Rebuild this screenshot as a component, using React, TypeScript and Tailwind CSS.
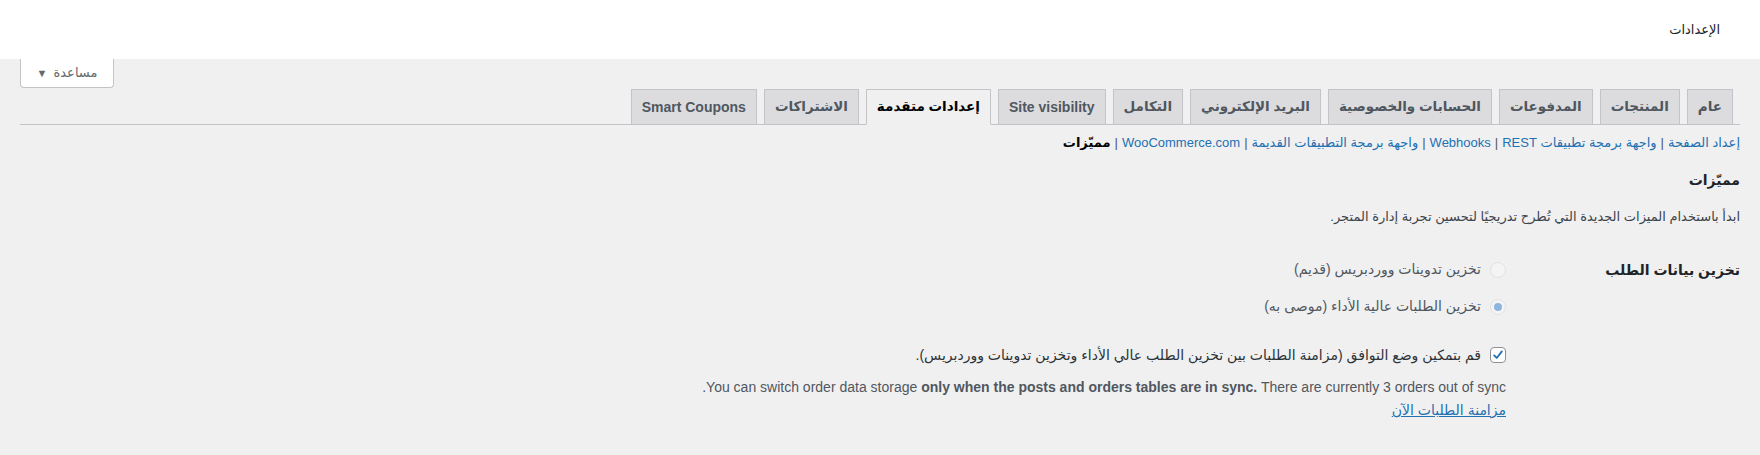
import React from 'react';

const font = { fontFamily: '"Liberation Sans", "DejaVu Sans", sans-serif' };

const tabs = [
  { label: 'عام' },
  { label: 'المنتجات' },
  { label: 'المدفوعات' },
  { label: 'الحسابات والخصوصية' },
  { label: 'البريد الإلكتروني' },
  { label: 'التكامل' },
  { label: 'Site visibility', latin: true },
  { label: 'إعدادات متقدمة', active: true },
  { label: 'الاشتراكات' },
  { label: 'Smart Coupons', latin: true },
];

const sublinks = [
  'إعداد الصفحة',
  'واجهة برمجة تطبيقات REST',
  'Webhooks',
  'واجهة برمجة التطبيقات القديمة',
  'WooCommerce.com',
];

function Radio({ checked }: { checked?: boolean }) {
  return (
    <span className="flex h-4 w-4 shrink-0 items-center justify-center rounded-full border border-[#e2e2e4] bg-[#f4f4f5]">
      {checked && <span className="h-2 w-2 rounded-full bg-[#8db6df]" />}
    </span>
  );
}

function Checkbox() {
  return (
    <span className="flex h-4 w-4 shrink-0 items-center justify-center rounded-[4px] border border-[#8c8f94] bg-white">
      <svg width="14" height="14" viewBox="0 0 20 20">
        <path d="M4.5 10.5 L8.2 14.2 L15.5 4.8" fill="none" stroke="#2271b1" strokeWidth="2.6" strokeLinecap="round" strokeLinejoin="round" />
      </svg>
    </span>
  );
}

export default function App() {
  return (
    <div dir="rtl" className="min-h-[455px] bg-[#f0f0f1] text-[13px] text-[#1d2327]" style={font}>
      <header className="flex h-[59px] items-center bg-white pr-[40px]">
        <h1 className="text-[13px] font-normal text-[#1d2327]">الإعدادات</h1>
      </header>

      <div className="px-[20px]">
        <div className="flex h-[30px] justify-end">
          <button className="flex h-[29px] w-[94px] items-center justify-center gap-[6px] rounded-b-[4px] border border-t-0 border-[#c3c4c7] bg-white text-[13px] text-[#646970]">
            <span>مساعدة</span>
            <span className="text-[11px]">▼</span>
          </button>
        </div>

        <nav className="flex border-b border-[#c3c4c7] pr-[7px]">
          {tabs.map((t) => (
            <span
              key={t.label}
              className={`-mb-px ml-[7px] border px-[10px] py-[5px] font-bold leading-[24px] ${
                t.latin ? 'text-[14px]' : 'text-[13.5px]'
              } ${
                t.active
                  ? 'border-[#c3c4c7] border-b-[#f0f0f1] bg-[#f0f0f1] text-black'
                  : 'border-[#c3c4c7] bg-[#dcdcde] text-[#50575e]'
              }`}
            >
              {t.label}
            </span>
          ))}
        </nav>

        <ul className="mt-[8px] flex h-[20px] items-center leading-[20px]">
          {sublinks.map((l) => (
            <li key={l} className="flex items-center">
              <span className="text-[#2271b1]">{l}</span>
              <span className="mx-[4px] text-[#50575e]">|</span>
            </li>
          ))}
          <li className="font-bold text-black">مميّزات</li>
        </ul>

        <h2 className="mt-[17px] text-[14px] font-bold leading-[20px] text-[#1d2327]">مميّزات</h2>
        <p className="mt-[17px] leading-[20px] text-[#3c434a]">
          ابدأ باستخدام الميزات الجديدة التي تُطرح تدريجيًا لتحسين تجربة إدارة المتجر.
        </p>

        <div className="mt-[24px] flex">
          <div className="w-[234px] shrink-0 pt-[9px] text-[14px] font-bold leading-[20px] text-[#1d2327]">
            تخزين بيانات الطلب
          </div>
          <div className="flex flex-col text-[14px]">
            <label className="flex h-[37px] items-center gap-[9px] text-[#50575e]">
              <Radio />
              <span>تخزين تدوينات ووردبريس (قديم)</span>
            </label>
            <label className="flex h-[37px] items-center gap-[9px] text-[#50575e]">
              <Radio checked />
              <span>تخزين الطلبات عالية الأداء (موصى به)</span>
            </label>

            <label className="mt-[18px] flex h-[24px] items-center gap-[9px] text-[#2c3338]">
              <Checkbox />
              <span>قم بتمكين وضع التوافق (مزامنة الطلبات بين تخزين الطلب عالي الأداء وتخزين تدوينات ووردبريس).</span>
            </label>

            <p className="mt-[10px] leading-[20px] text-[#50575e]">
              You can switch order data storage <b>only when the posts and orders tables are in sync.</b> There are currently 3 orders out of sync.
            </p>
            <a className="mt-[3px] self-start leading-[20px] text-[#2271b1] underline">مزامنة الطلبات الآن</a>
          </div>
        </div>
      </div>
    </div>
  );
}
